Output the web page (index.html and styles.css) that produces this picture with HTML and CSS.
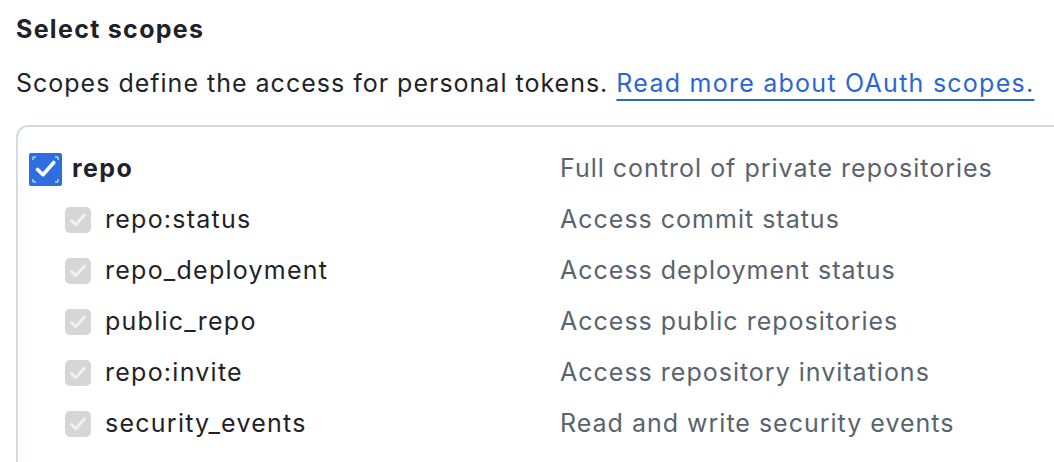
FILE: index.html
```html
<!DOCTYPE html>
<html lang="en">
  <head>
    <meta charset="UTF-8" />
    <meta name="viewport" content="width=device-width, initial-scale=1.0" />
    <title>Select scopes</title>
    <link rel="stylesheet" href="styles.css">
  </head>
  <body>
    <div class="scopes">
      <h2 class="title">Select scopes</h2>
      <p class="note">Scopes define the access for personal tokens. <a href="#">Read more about OAuth scopes.</a></p>

      <div class="scope-box">
        <div class="scope-row parent">
          <label class="scope-name">
            <span class="check check-on">
              <svg width="33" height="33" viewBox="0 0 33 33">
                <path d="M4 7V4h3M26 4h3v3M29 26v3h-3M7 29H4v-3" fill="none" stroke="#fff" stroke-width="1" />
                <path d="M8.5 16.5l5.5 5.2L24.8 9.5" fill="none" stroke="#fff" stroke-width="3.6" stroke-linecap="round" stroke-linejoin="round" />
              </svg>
            </span>
            repo
          </label>
          <span class="scope-desc">Full control of private repositories</span>
        </div>
        <div class="scope-row child">
          <label class="scope-name"><span class="check check-off"><svg width="26" height="26" viewBox="0 0 26 26"><path d="M6.5 13.5l4.2 4.2L19.5 8" fill="none" stroke="#f2f2f2" stroke-width="2.8" stroke-linecap="round" stroke-linejoin="round" /></svg></span>repo:status</label>
          <span class="scope-desc">Access commit status</span>
        </div>
        <div class="scope-row child">
          <label class="scope-name"><span class="check check-off"><svg width="26" height="26" viewBox="0 0 26 26"><path d="M6.5 13.5l4.2 4.2L19.5 8" fill="none" stroke="#f2f2f2" stroke-width="2.8" stroke-linecap="round" stroke-linejoin="round" /></svg></span>repo_deployment</label>
          <span class="scope-desc">Access deployment status</span>
        </div>
        <div class="scope-row child">
          <label class="scope-name"><span class="check check-off"><svg width="26" height="26" viewBox="0 0 26 26"><path d="M6.5 13.5l4.2 4.2L19.5 8" fill="none" stroke="#f2f2f2" stroke-width="2.8" stroke-linecap="round" stroke-linejoin="round" /></svg></span>public_repo</label>
          <span class="scope-desc">Access public repositories</span>
        </div>
        <div class="scope-row child">
          <label class="scope-name"><span class="check check-off"><svg width="26" height="26" viewBox="0 0 26 26"><path d="M6.5 13.5l4.2 4.2L19.5 8" fill="none" stroke="#f2f2f2" stroke-width="2.8" stroke-linecap="round" stroke-linejoin="round" /></svg></span>repo:invite</label>
          <span class="scope-desc">Access repository invitations</span>
        </div>
        <div class="scope-row child">
          <label class="scope-name"><span class="check check-off"><svg width="26" height="26" viewBox="0 0 26 26"><path d="M6.5 13.5l4.2 4.2L19.5 8" fill="none" stroke="#f2f2f2" stroke-width="2.8" stroke-linecap="round" stroke-linejoin="round" /></svg></span>security_events</label>
          <span class="scope-desc">Read and write security events</span>
        </div>
      </div>
    </div>
  </body>
</html>
```

FILE: styles.css
```css
body {
  margin: 0;
  padding: 0;
  background-color: #ffffff;
  font-family: Inter, "Noto Sans", sans-serif;
  color: #1f2328;
  overflow: hidden;
}
.scopes {
  padding: 14px 0 0 16px;
}
.title {
  margin: 0;
  font-size: 25px;
  line-height: 30px;
  font-weight: 700;
  letter-spacing: 1.3px;
}
.note {
  margin: 24px 0 0 0;
  font-size: 25px;
  line-height: 30px;
  letter-spacing: 1px;
}
.note a {
  color: #2a67d3;
  letter-spacing: 1.25px;
  text-decoration: underline;
  text-decoration-thickness: 2px;
  text-underline-offset: 7px;
}
.scope-box {
  margin-top: 27px;
  width: 1100px;
  height: 400px;
  border: 2px solid #d5dae0;
  border-radius: 12px;
  padding: 16px 0 0 11px;
}
.scope-row {
  display: flex;
  align-items: center;
  height: 51px;
  font-size: 25px;
}
.scope-row.parent {
  height: 50px;
}
.scope-name {
  display: flex;
  align-items: center;
  width: 531px;
  letter-spacing: 1.25px;
}
.parent .scope-name {
  font-weight: 700;
  letter-spacing: 1.4px;
}
.child .scope-name {
  padding-left: 36px;
  width: 495px;
}
.scope-desc {
  color: #59636e;
  letter-spacing: 1px;
}
.check {
  display: flex;
  flex-shrink: 0;
  margin-top: 2px;
}
.check-on {
  width: 33px;
  height: 33px;
  background: #2f6ee0;
  border-radius: 2px;
  margin-right: 10px;
}
.check-off {
  width: 26px;
  height: 26px;
  background: #d6d6d6;
  border-radius: 5px;
  margin-right: 14px;
}
```
